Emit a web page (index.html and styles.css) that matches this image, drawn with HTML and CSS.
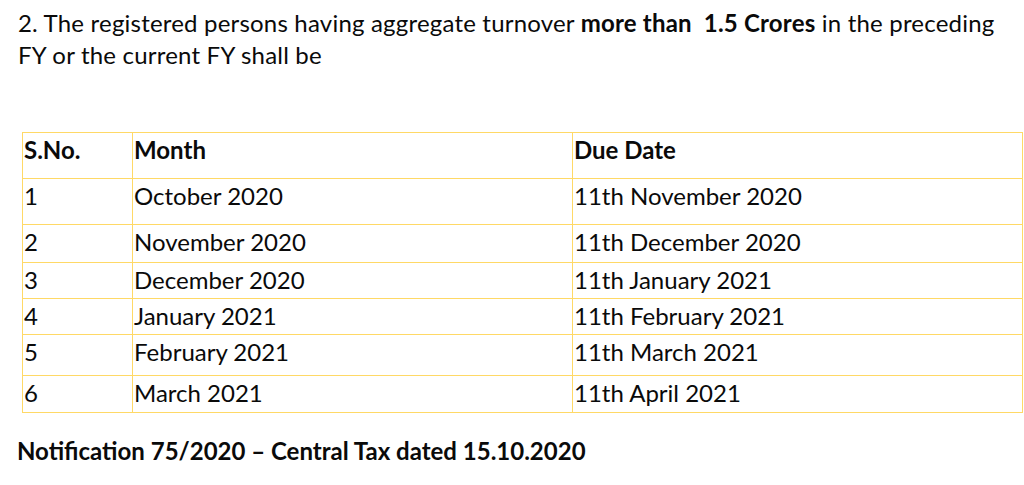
FILE: index.html
```html
<!DOCTYPE html>
<html>
<head>
<meta charset="utf-8">
<link rel="stylesheet" href="styles.css">
</head>
<body>
<div class="page">
  <p class="intro">2. The registered persons having aggregate turnover <b>more than&nbsp; 1.5 Crores</b> in the preceding FY or the current FY shall be</p>
  <table class="due">
    <colgroup>
      <col class="c1"><col class="c2"><col class="c3">
    </colgroup>
    <tr class="h46 head"><td>S.No.</td><td>Month</td><td>Due Date</td></tr>
    <tr class="h46"><td>1</td><td>October 2020</td><td>11th November 2020</td></tr>
    <tr class="h38"><td>2</td><td>November 2020</td><td>11th December 2020</td></tr>
    <tr class="h36"><td>3</td><td>December 2020</td><td>11th January 2021</td></tr>
    <tr class="h36"><td>4</td><td>January 2021</td><td>11th February 2021</td></tr>
    <tr class="h41"><td>5</td><td>February 2021</td><td>11th March 2021</td></tr>
    <tr class="h37"><td>6</td><td>March 2021</td><td>11th April 2021</td></tr>
  </table>
  <p class="note">Notification 75/2020 – Central Tax dated 15.10.2020</p>
</div>
</body>
</html>
```

FILE: styles.css
```css
html, body {
  margin: 0;
  padding: 0;
  background: #ffffff;
}
body {
  font-family: "Lato", "Open Sans", sans-serif;
  color: #0a0a0a;
}
.page {
  padding: 7px 0 0 18px;
}
.intro {
  margin: 0;
  font-size: 24px;
  letter-spacing: 0.2px;
  line-height: 32px;
  width: 1000px;
}
.intro b {
  font-weight: 700;
}
.due {
  margin: 61px 0 0 4px;
  border-collapse: collapse;
  table-layout: fixed;
  width: 1000px;
  font-size: 24px;
}
.c1 { width: 110px; }
.c2 { width: 440px; }
.c3 { width: 450px; }
.due td {
  border: 1px solid #ffd966;
  padding: 3px 2px 0 1px;
  vertical-align: top;
  line-height: 28px;
}
.head td {
  font-weight: 700;
}
.h46 { height: 46px; }
.h38 { height: 38px; }
.h36 { height: 36px; }
.h41 { height: 41px; }
.h37 { height: 37px; }
.note {
  margin: 23px 0 0 -1px;
  font-size: 24px;
  font-weight: 700;
  line-height: 30px;
}
```
